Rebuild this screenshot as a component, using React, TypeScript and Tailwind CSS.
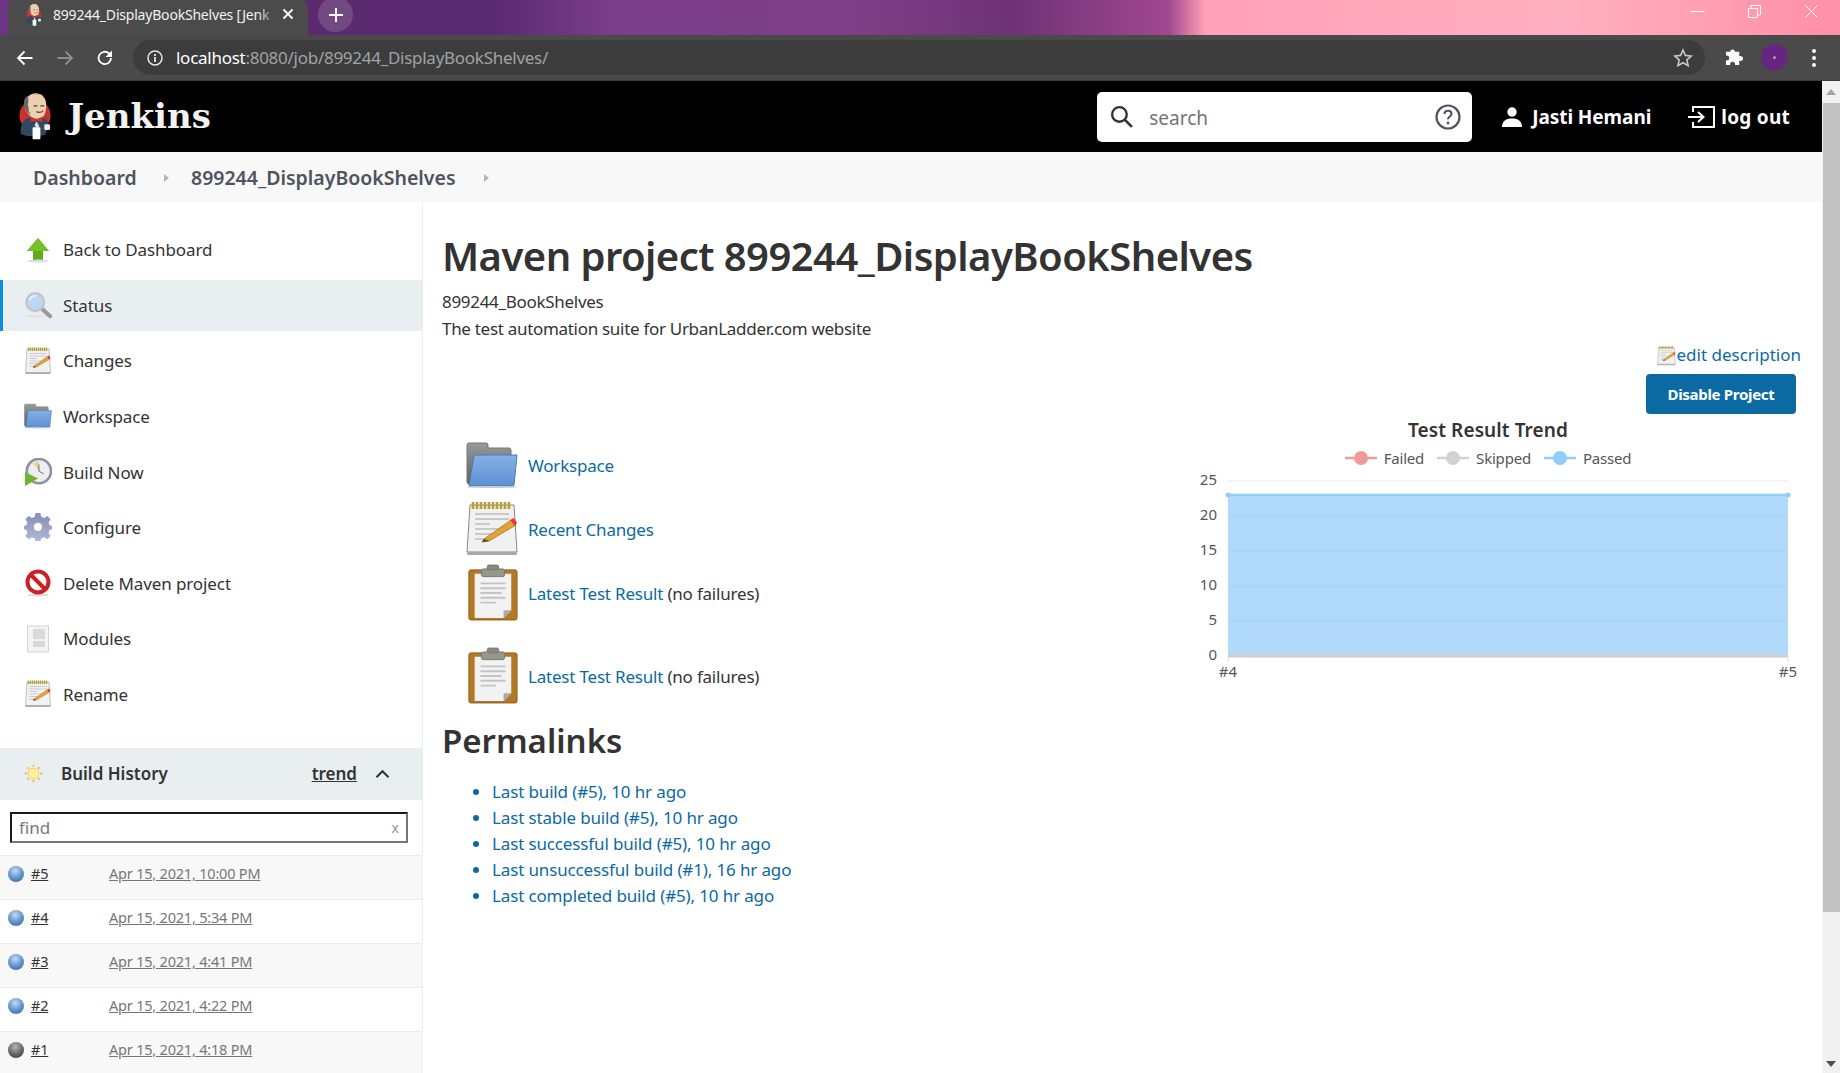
import React from "react";

const FONT = "font-['Noto_Sans','Open_Sans',sans-serif]";

function Jenkins({ className }: { className: string }) {
  return (
    <svg viewBox="0 0 36 48" className={className}>
      <circle cx="17.500" cy="23" r="16" fill="#c8322d" />
      <path d="M3 42c-1-7 1-13 6-16l6-1 5 3 6-2c4 1 6 4 5 8l-3 9-6 1H9z" fill="#2f4a60" />
      <path d="M7 13C7 5 12 0 18 0s11 4 11 12c0 6-1 10-3 12-3 3-9 3-13 0-3-3-6-6-6-11z" fill="#ecd0b0" />
      <path d="M7 15C5 8 7 4 10 3c1 3 1 6 0 9 1 2 1 4 1 6l2 4c-3-1-5-4-6-7z" fill="#6a6466" />
      <path d="M14 2c3-2 9-2 12 1-3-1-8-1-12-1z" fill="#d7b795" />
      <path d="M16 13h4M23 13h4" stroke="#444" strokeWidth="1.300" />
      <path d="M19 19c2 1 5 1 7-1" stroke="#6b4a35" strokeWidth="1.200" fill="none" />
      <path d="M13 24l6 3 6-3v6l-6-2-6 2z" fill="#d8322e" />
      <path d="M19 29l3 5-3 2-2-3z" fill="#d9dfe4" />
      <rect x="15" y="35" width="8" height="12.500" rx="1" fill="#ffffff" />
      <rect x="27" y="32" width="6" height="6" rx="1.500" fill="#eeeeee" />
    </svg>
  );
}

function Folder({ className }: { className: string }) {
  return (
    <svg viewBox="0 0 52 46" className={className}>
      <defs>
        <linearGradient id="fb" x1="0" y1="0" x2="0" y2="1"><stop offset="0" stopColor="#86b0e6" /><stop offset="1" stopColor="#5f90d0" /></linearGradient>
        <linearGradient id="fg" x1="0" y1="0" x2="0" y2="1"><stop offset="0" stopColor="#9a9a9a" /><stop offset="1" stopColor="#5e5e5e" /></linearGradient>
      </defs>
      <path d="M1 3a2 2 0 0 1 2-2h17a2 2 0 0 1 2 2v3h21a2 2 0 0 1 2 2v34H3a2 2 0 0 1-2-2z" fill="url(#fg)" stroke="#777" />
      <path d="M8 13h43l-3 30a1 1 0 0 1-1 1H3z" fill="url(#fb)" stroke="#4a7ab8" />
      <ellipse cx="26" cy="45" rx="25" ry="1" fill="#ccc" />
    </svg>
  );
}

function Notepad({ className }: { className: string }) {
  return (
    <svg viewBox="0 0 52 56" className={className}>
      <path d="M4 4h44l3 47H1z" fill="#f1f1f1" stroke="#888" />
      <path d="M1 51h50v2a1 1 0 0 1-1 1H2a1 1 0 0 1-1-1z" fill="#aaa" />
      <path d="M7 1v7M11 1v7M15 1v7M19 1v7M23 1v7M27 1v7M31 1v7M35 1v7M39 1v7M43 1v7" stroke="#b8a035" strokeWidth="2.600" />
      <path d="M9 13h34M9 18h34M9 23h15M9 28h28M9 33h18M9 38h12" stroke="#bcbcbc" strokeWidth="1.400" />
      <path d="M18 38l27-19 5 5-27 16-7 1z" fill="#e0a33a" stroke="#a87420" strokeWidth=".8" />
      <path d="M44 19l4-2 3 5-2 3z" fill="#e23a3a" />
      <path d="M16 41l2-3 5 2z" fill="#444" />
    </svg>
  );
}

function Clipboard({ className }: { className: string }) {
  return (
    <svg viewBox="-2 0 54 60" className={className}>
      <rect x="1" y="6" width="50" height="52" rx="2" fill="#b27a25" stroke="#8a5c18" />
      <path d="M7 10h38v38l-8 8H7z" fill="#f2f2f2" />
      <path d="M37 56l8-8h-7a1 1 0 0 0-1 1z" fill="#aaa" />
      <path d="M13 20h26M13 25h26M13 30h22M13 35h26M13 40h16" stroke="#c4c4c4" strokeWidth="2" />
      <rect x="14" y="5" width="24" height="8" rx="2" fill="#97968a" stroke="#777" />
      <rect x="20" y="1" width="12" height="5" rx="2" fill="#8a897e" stroke="#777" />
    </svg>
  );
}

function ArrowUp({ className }: { className: string }) {
  return (
    <svg viewBox="0 0 28 28" className={className}>
      <path d="M14 2l11 13h-6v9H9v-9H3z" fill="#62ab1c" />
      <path d="M14 2l11 13H3z" fill="#76c02a" />
      <ellipse cx="14" cy="25" rx="11" ry="1.400" fill="#ddd" />
    </svg>
  );
}

function Magnifier({ className }: { className: string }) {
  return (
    <svg viewBox="0 0 30 30" className={className}>
      <path d="M18 18l10 9" stroke="#9a9a9a" strokeWidth="4.500" strokeLinecap="round" />
      <circle cx="12" cy="12" r="9.500" fill="#bcd7f3" stroke="#c2c6cb" strokeWidth="2.600" />
      <path d="M6 10c1-3 4-5 7-5" stroke="#e6f1fb" strokeWidth="2" fill="none" />
      <ellipse cx="13" cy="27" rx="12" ry="1.400" fill="#e2e2e2" />
    </svg>
  );
}

function Clock({ className }: { className: string }) {
  return (
    <svg viewBox="0 0 30 30" className={className}>
      <circle cx="16" cy="14" r="13" fill="#eeeeee" stroke="#8d8fa6" strokeWidth="2.800" />
      <path d="M16 14l-6-8c2-1.500 4-2 6-2z" fill="#e6d58f" />
      <path d="M16 14l5 3M16 14V7" stroke="#666" strokeWidth="1" />
      <path d="M1 15l14 7-14 8z" fill="#6cb62c" />
    </svg>
  );
}

function Gear({ className }: { className: string }) {
  return (
    <svg viewBox="0 0 30 30" className={className}>
      <defs><linearGradient id="gg" x1="0" y1="0" x2="0" y2="1"><stop offset="0" stopColor="#7f8ebd" /><stop offset="1" stopColor="#b3b8d6" /></linearGradient></defs>
      <path
        d="M12.500 0h5l1 4 3 1.300 3.500-2.200 3.500 3.500-2.200 3.500 1.300 3 3 1v3l-3 1-1.300 3 2.200 3.500-3.500 3.500-3.500-2.200-3 1.300-1 3.300h-5l-1-3.300-3-1.300-3.500 2.200-3.500-3.500 2.200-3.500-1.300-3-3-1v-3l3-1 1.300-3-2.200-3.500 3.500-3.500 3.500 2.200 3-1.300z"
        fill="url(#gg)"
      />
      <circle cx="15" cy="15" r="5" fill="#fff" stroke="#a9a9a9" strokeWidth="1.500" />
    </svg>
  );
}

function NoEntry({ className }: { className: string }) {
  return (
    <svg viewBox="0 0 28 28" className={className}>
      <ellipse cx="14" cy="26" rx="11" ry="1.500" fill="#ddd" />
      <circle cx="14" cy="13" r="10.500" fill="#fff" stroke="#cf1f22" strokeWidth="4" />
      <path d="M6.500 5.500l15 15" stroke="#cf1f22" strokeWidth="4" />
    </svg>
  );
}

function Module({ className }: { className: string }) {
  return (
    <svg viewBox="0 0 26 28" className={className}>
      <rect x="2.500" y="1" width="21" height="26" fill="#f4f4f4" stroke="#d4d4d4" />
      <rect x="8" y="4" width="12" height="10" fill="#d9d9d9" />
      <rect x="8" y="16" width="12" height="6" fill="#d9d9d9" />
    </svg>
  );
}

function Sun({ className }: { className: string }) {
  return (
    <svg viewBox="0 0 20 20" className={className}>
      <circle cx="10" cy="10" r="5.500" fill="#fff0a0" stroke="#f5cf55" />
      <path
        d="M10 0l1.500 3h-3zM10 20l-1.500-3h3zM0 10l3-1.500v3zM20 10l-3 1.500v-3zM3 3l3.200 1-2.200 2.200zM17 17l-3.200-1 2.200-2.200zM17 3l-1 3.200L13.800 4zM3 17l1-3.200L6.200 16z"
        fill="#f6b95d"
      />
    </svg>
  );
}

function Ball({ grey }: { grey?: boolean }) {
  const c = grey ? "bg-[radial-gradient(circle_at_45%_30%,#b5b5b5,#5a5a5a_60%,#444)]" : "bg-[radial-gradient(circle_at_45%_30%,#c3daf0,#5a8fc9_55%,#2f63a6)]";
  return <span className={`block w-4 h-4 rounded-full mt-[3px] shrink-0 ${c}`} />;
}

const nav: [string, (p: { className: string }) => React.ReactElement, boolean?][] = [
  ["Back to Dashboard", ArrowUp],
  ["Status", Magnifier, true],
  ["Changes", Notepad],
  ["Workspace", Folder],
  ["Build Now", Clock],
  ["Configure", Gear],
  ["Delete Maven project", NoEntry],
  ["Modules", Module],
  ["Rename", Notepad],
];

const builds: [string, string, boolean?][] = [
  ["#5", "Apr 15, 2021, 10:00 PM"],
  ["#4", "Apr 15, 2021, 5:34 PM"],
  ["#3", "Apr 15, 2021, 4:41 PM"],
  ["#2", "Apr 15, 2021, 4:22 PM"],
  ["#1", "Apr 15, 2021, 4:18 PM", true],
];

const perma = [
  "Last build (#5), 10 hr ago",
  "Last stable build (#5), 10 hr ago",
  "Last successful build (#5), 10 hr ago",
  "Last unsuccessful build (#1), 16 hr ago",
  "Last completed build (#5), 10 hr ago",
];

function Chrome() {
  return (
    <>
      <div className="h-[35px] flex pl-2 relative shrink-0 bg-[linear-gradient(90deg,#6f3585_0%,#5b2a6e_16%,#5a2a72_27%,#7a3d88_33%,#7f3f88_46%,#6f3276_55%,#a0478f_63.500%,#ffa0b8_65.500%,#ffb0c0_85%,#ff8fa8_100%)]">
        <div className="relative w-[300px] h-[35px] bg-[#4b4b4b] rounded-t-lg flex items-center pl-[17px] pb-[6px]">
          <Jenkins className="w-[18px] h-[22px]" />
          <span className="ml-[10px] whitespace-nowrap text-[14px] text-[#f1f1f1] tracking-[-0.2px]">899244_DisplayBookShelves [Jenk</span>
          <span className="absolute left-[250px] top-0 w-[24px] h-[35px] bg-[linear-gradient(90deg,transparent,#4b4b4b_80%)]" />
          <svg viewBox="0 0 12 12" className="absolute left-[274px] top-[8px] w-3 h-3"><path d="M1.500 1.500l9 9M10.500 1.500l-9 9" stroke="#fff" strokeWidth="1.800" /></svg>
        </div>
        <div className="w-[35px] h-[35px] rounded-full bg-white/15 ml-[10px] mt-[-3px] flex items-center justify-center">
          <svg viewBox="0 0 16 16" className="w-4 h-4"><path d="M8 1v14M1 8h14" stroke="#fff" strokeWidth="2" /></svg>
        </div>
        <div className="ml-auto flex items-center h-[22px]">
          <span className="block w-[14px] h-px bg-white mr-[44px]" />
          <svg viewBox="0 0 13 13" className="w-[13px] h-[13px] mr-[44px]"><path d="M.5 3.500h9v9h-9zM3 3.500V.5h9.500v9.500h-3" fill="none" stroke="#fff" /></svg>
          <svg viewBox="0 0 13 13" className="w-[13px] h-[13px] mr-[22px]"><path d="M.5.5l12 12M12.500.5l-12 12" stroke="#fff" /></svg>
        </div>
      </div>
      <div className="h-[46px] bg-[#4a4a4a] border-b border-[#3a3a3a] flex items-center shrink-0">
        <svg viewBox="0 0 18 18" className="w-[18px] h-[18px] ml-4"><path d="M16.500 9h-14M8.500 2.500L2 9l6.500 6.500" fill="none" stroke="#fff" strokeWidth="1.800" /></svg>
        <svg viewBox="0 0 18 18" className="w-[18px] h-[18px] ml-[22px]"><path d="M1.500 9h14M9.500 2.500L16 9l-6.500 6.500" fill="none" stroke="#8e8e8e" strokeWidth="1.800" /></svg>
        <svg viewBox="0 0 18 18" className="w-[18px] h-[18px] ml-[22px]"><path d="M15 9a6.200 6.200 0 1 1-1.900-4.500L15.500 7" fill="none" stroke="#fff" strokeWidth="1.800" /><path d="M16 1.500V8H9.500z" fill="#fff" /></svg>
        <div className="ml-[19px] w-[1572px] h-[35px] rounded-full bg-[#3c3c3c] flex items-center pl-[14px] pr-[12px]">
          <svg viewBox="0 0 16 16" className="w-4 h-4"><circle cx="8" cy="8" r="7" fill="none" stroke="#e5e5e5" strokeWidth="1.500" /><path d="M8 7v5M8 4v2" stroke="#e5e5e5" strokeWidth="1.800" /></svg>
          <span className="ml-[13px] text-[17px] tracking-[-0.27px] text-[#9fa3a6]"><span className="text-white">localhost</span>:8080/job/899244_DisplayBookShelves/</span>
          <svg viewBox="0 0 20 20" className="w-5 h-5 ml-auto"><path d="M10 2l2.400 5.400 5.800.6-4.400 3.900 1.300 5.700L10 14.700 4.900 17.600l1.300-5.700L1.800 8l5.800-.6z" fill="none" stroke="#c8c8c8" strokeWidth="1.600" /></svg>
        </div>
        <svg viewBox="0 0 20 20" className="w-[19px] h-[19px] ml-[20px]"><path d="M8 1.500c1.500 0 2.500 1 2.500 2.500H15v4.500c2.500-.5 4 .8 4 2.500s-1.500 3-4 2.500V18h-4.500c.5-2.500-1-3.500-2.500-3.500S5 15.500 5.500 18H1v-5c2.500.5 3.500-1 3.500-2.500S3.500 7.500 1 8V4h4.500c0-1.500 1-2.500 2.500-2.500z" fill="#fff" /></svg>
        <div className="w-[27px] h-[27px] rounded-full bg-[#66267f] ml-[17px] flex items-center justify-center"><span className="block w-[3px] h-[3px] bg-[#c58bd0] rounded-full" /></div>
        <div className="ml-[24px] flex flex-col gap-[3px]">
          <span className="block w-1 h-1 rounded-full bg-white" />
          <span className="block w-1 h-1 rounded-full bg-white" />
          <span className="block w-1 h-1 rounded-full bg-white" />
        </div>
      </div>
    </>
  );
}

function Header() {
  return (
    <div className="h-[71px] bg-black flex items-center shrink-0 pl-[18px]">
      <Jenkins className="w-[35px] h-[47px]" />
      <span className="ml-[15px] text-[34px] font-bold text-[#f2f2f2] font-['DejaVu_Serif',serif]">Jenkins</span>
      <div className="ml-auto w-[375px] h-[50px] bg-white rounded-[5px] flex items-center pl-[12px] pr-[11px]">
        <svg viewBox="0 0 24 24" className="w-[25px] h-[25px]"><circle cx="10" cy="10" r="7" fill="none" stroke="#333" strokeWidth="2.300" /><path d="M15 15l7 7" stroke="#333" strokeWidth="2.600" /></svg>
        <span className="ml-[15px] mt-[3px] text-[19px] text-[#757575]">search</span>
        <svg viewBox="0 0 26 26" className="w-[26px] h-[26px] ml-auto"><circle cx="13" cy="13" r="11.500" fill="none" stroke="#4d545d" strokeWidth="2.200" /><path d="M9.500 10c0-2 1.500-3.200 3.500-3.200s3.500 1.200 3.500 3c0 2.800-3.500 2.600-3.500 5.400" fill="none" stroke="#4d545d" strokeWidth="2.100" /><circle cx="13" cy="19" r="1.400" fill="#4d545d" /></svg>
      </div>
      <svg viewBox="0 0 20 20" className="w-5 h-5 ml-[30px]"><circle cx="10" cy="5" r="4.700" fill="#fff" /><path d="M0 20c0-6 4-8.500 10-8.500S20 14 20 20z" fill="#fff" /></svg>
      <span className="ml-[10px] mt-[2px] text-[19px] font-bold text-white tracking-[-0.07px]">Jasti Hemani</span>
      <svg viewBox="0 0 28 22" className="w-7 h-[22px] ml-[36px]"><path d="M6 6V1h21v20H6v-5" fill="none" stroke="#fff" strokeWidth="2" /><path d="M1 11h15M11 6l5.500 5L11 16" fill="none" stroke="#fff" strokeWidth="2" /></svg>
      <span className="ml-[6px] mr-[32px] mt-[2px] text-[19px] font-bold text-white tracking-[0.25px]">log out</span>
    </div>
  );
}

function Sidebar() {
  return (
    <aside className="w-[423px] shrink-0 border-r border-[#e9eef1] pt-[22px]">
      {nav.map(([label, Icon, active]) => (
        <div
          key={label}
          className={`h-[51px] mb-[4.600px] flex items-center text-[17px] text-[#333] tracking-[-0.1px] ${active ? "bg-[#e9eef1] border-l-[3px] border-[#0b8de0] pl-[21px]" : "pl-[24px]"}`}
        >
          <Icon className="w-[28px] h-[28px] shrink-0" />
          <span className="ml-[11px] mt-[1px]">{label}</span>
        </div>
      ))}
      <div className="mt-[28px] h-[52px] bg-[#e9eef1] flex items-center pl-[24px] text-[17px] font-semibold text-[#333]">
        <Sun className="w-[19px] h-[19px]" />
        <span className="ml-[18px]">Build History</span>
        <span className="ml-auto underline">trend</span>
        <svg viewBox="0 0 16 10" className="w-[15px] h-[10px] ml-[18px] mr-[32px]"><path d="M1.500 8.500L8 2l6.500 6.500" fill="none" stroke="#333" strokeWidth="2.200" /></svg>
      </div>
      <div className="h-[56px] flex items-center pl-[10px] pr-[14px] border-b border-[#e9eef1]">
        <div className="w-[398px] h-[31px] border-2 border-t-[#1a1a1a] border-l-[#1a1a1a] border-r-[#767676] border-b-[#767676] flex items-center pl-[7px] pr-[7px] text-[17px] text-[#777]">
          <span>find</span>
          <span className="ml-auto text-[14px] text-[#999]">x</span>
        </div>
      </div>
      {builds.map(([id, date, grey], i) => (
        <div key={id} className={`h-[44px] flex items-start pt-[7px] pl-[8px] border-b border-[#e9eef1] ${i % 2 === 0 ? "bg-[#f8f8f8]" : "bg-white"}`}>
          <Ball grey={grey} />
          <span className="ml-[7px] w-[78px] text-[14.500px] underline text-[#333] tracking-[-0.2px]">{id}</span>
          <span className="text-[14.500px] underline text-[#767676] tracking-[-0.2px]">{date}</span>
        </div>
      ))}
    </aside>
  );
}

function TaskRow({ Icon, h, label, note }: { Icon: (p: { className: string }) => React.ReactElement; h: string; label: string; note?: boolean }) {
  return (
    <div className="h-[64px] flex items-center">
      <Icon className={`w-[52px] ${h} shrink-0`} />
      <div className="ml-[10px] mt-[1px] text-[17px] tracking-[-0.2px]">
        <span className="text-[#0b6aa2]">{label}</span>
        {note && <span className="text-[#333]"> (no failures)</span>}
      </div>
    </div>
  );
}

function Trend() {
  const X0 = 53, X1 = 613;
  const ys = [186, 151, 116, 81, 46, 11];
  return (
    <svg viewBox="0 0 626 210" className="w-[626px] h-[210px]">
      <rect x={X0} y="25" width={X1 - X0} height="161" fill="#b1d9fa" />
      {ys.map((y, i) => (
        <g key={y}>
          <path d={`M${X0} ${y}H${X1}`} stroke={i === 5 ? "#ebeff4" : "#a6d3f8"} strokeWidth="1.300" />
          <text x="42" y={y + 4} textAnchor="end" fontSize="15" fill="#555" fontFamily="Noto Sans, sans-serif">{i * 5}</text>
        </g>
      ))}
      <path d={`M${X0} 25H${X1}`} stroke="#90cdfb" strokeWidth="2.400" />
      <circle cx={X0} cy="25" r="2.500" fill="#90cdfb" />
      <circle cx={X1} cy="25" r="2.500" fill="#90cdfb" />
      <path d={`M${X0} 186H${X1}`} stroke="#d3cccc" strokeWidth="3" />
      <path d={`M${X0} 186v6M${X1} 186v6`} stroke="#ddd" strokeWidth="1" />
      <text x={X0} y="207" textAnchor="middle" fontSize="15" fill="#555" fontFamily="Noto Sans, sans-serif">#4</text>
      <text x={X1} y="207" textAnchor="middle" fontSize="15" fill="#555" fontFamily="Noto Sans, sans-serif">#5</text>
    </svg>
  );
}

function Legend({ color, label }: { color: string; label: string }) {
  return (
    <div className="flex items-center">
      <svg viewBox="0 0 32 16" className="w-[32px] h-4"><path d="M0 8h32" stroke={color} strokeWidth="2.500" /><circle cx="16" cy="8" r="7" fill={color} /></svg>
      <span className="ml-[7px] text-[15px] text-[#555] tracking-[-0.2px]">{label}</span>
    </div>
  );
}

function Main() {
  return (
    <main className="flex-1 min-w-0 pl-[19px] pr-[21px] pt-[26px] text-[#333]">
      <h1 className="text-[40px] leading-[56px] font-semibold tracking-[-0.55px] whitespace-nowrap">Maven project 899244_DisplayBookShelves</h1>
      <div className="mt-[4px] text-[17px] leading-[27px] tracking-[-0.3px]">
        <div>899244_BookShelves</div>
        <div>The test automation suite for UrbanLadder.com website</div>
      </div>
      <div className="flex justify-end items-center h-[24px] mt-[1px]">
        <Notepad className="w-[19px] h-[20px] mt-[2px]" />
        <span className="text-[17px] text-[#0b6aa2]">edit description</span>
      </div>
      <div className="flex mt-[7px]">
        <div className="flex-1 min-w-0 pt-[59px]">
          <div className="pl-[24px]">
            <TaskRow Icon={Folder} h="h-[46px]" label="Workspace" />
            <TaskRow Icon={Notepad} h="h-[56px]" label="Recent Changes" />
            <TaskRow Icon={Clipboard} h="h-[60px]" label="Latest Test Result" note />
            <div className="h-[19px]" />
            <TaskRow Icon={Clipboard} h="h-[60px]" label="Latest Test Result" note />
          </div>
          <h2 className="mt-[11px] text-[33px] leading-[44px] font-semibold">Permalinks</h2>
          <ul className="mt-[16px] pl-[50px] list-disc text-[17px] leading-[26px] tracking-[-0.14px] text-[#0b6aa2]">
            {perma.map((p) => (
              <li key={p}>{p}</li>
            ))}
          </ul>
        </div>
        <div className="w-[626px] shrink-0">
          <div className="flex justify-end pr-[5px]">
            <div className="w-[150px] h-[40px] bg-[#0b6aa2] rounded-[4px] flex items-center justify-center text-[15px] font-bold text-white tracking-[-0.3px]">Disable Project</div>
          </div>
          <div className="mt-[3px] text-center text-[19px] leading-[26px] font-semibold text-[#333] tracking-[0.1px]">Test Result Trend</div>
          <div className="flex justify-center gap-[13px] mt-[3px] h-[24px] items-center">
            <Legend color="#ef9a9a" label="Failed" />
            <Legend color="#d2d2d2" label="Skipped" />
            <Legend color="#90cdfb" label="Passed" />
          </div>
          <Trend />
        </div>
      </div>
    </main>
  );
}

function Scrollbar() {
  return (
    <div className="w-[18px] shrink-0 bg-[#f1f1f1] flex flex-col items-center">
      <div className="h-[22px] flex items-center"><span className="block border-x-[5px] border-x-transparent border-b-[6px] border-b-[#a3a3a3]" /></div>
      <div className="w-full h-[809px] bg-[#c1c1c1] ml-[2px]" />
      <div className="flex-1" />
      <div className="h-[18px] flex items-center"><span className="block border-x-[5px] border-x-transparent border-t-[6px] border-t-[#505050]" /></div>
    </div>
  );
}

export default function App() {
  return (
    <div className={`w-[1840px] h-[1073px] overflow-hidden flex flex-col bg-white ${FONT}`}>
      <Chrome />
      <div className="flex flex-1 min-h-0">
        <div className="flex-1 min-w-0 flex flex-col">
          <Header />
          <div className="h-[50px] bg-[#f8f8f8] shrink-0 flex items-center pl-[33px] pt-[2px] text-[19.500px] font-semibold text-[#4d545d] tracking-[0px]">
            <span className="w-[131px]">Dashboard</span>
            <span className="block border-y-[4px] border-y-transparent border-l-[5px] border-l-[#b5b8bb]" />
            <span className="ml-[22px] w-[293px]">899244_DisplayBookShelves</span>
            <span className="block border-y-[4px] border-y-transparent border-l-[5px] border-l-[#b5b8bb]" />
          </div>
          <div className="flex flex-1 min-h-0">
            <Sidebar />
            <Main />
          </div>
        </div>
        <Scrollbar />
      </div>
    </div>
  );
}
